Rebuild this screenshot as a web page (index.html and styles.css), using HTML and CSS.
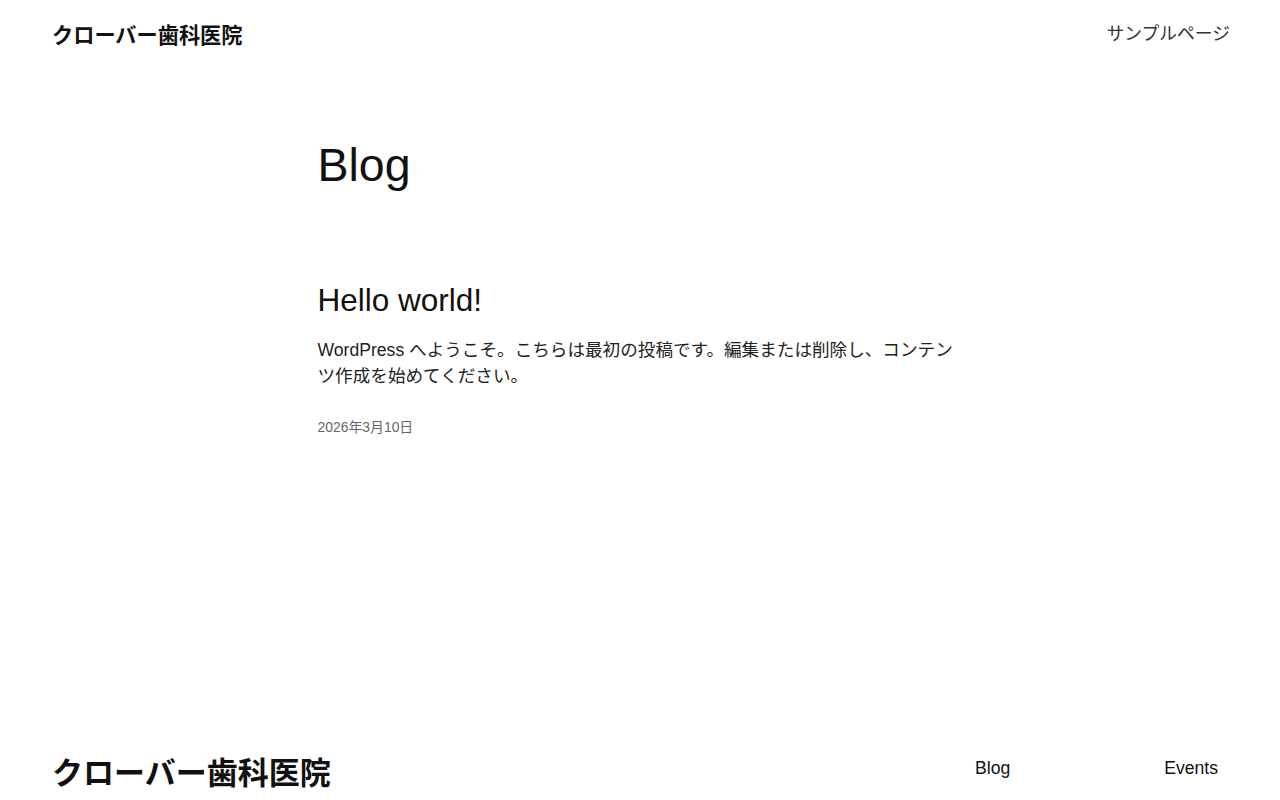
FILE: index.html
```html
<!DOCTYPE html>
<html lang="ja">
<head>
<meta charset="utf-8">
<title>Blog – クローバー歯科医院</title>
<link rel="stylesheet" href="styles.css">
</head>
<body>
<header class="site-header">
  <div class="site-title">クローバー歯科医院</div>
  <nav class="main-nav"><a href="#">サンプルページ</a></nav>
</header>
<main class="content">
  <h1 class="page-title">Blog</h1>
  <article class="post">
    <h2 class="post-title">Hello world!</h2>
    <p class="post-excerpt">WordPress へようこそ。こちらは最初の投稿です。編集または削除し、コンテンツ作成を始めてください。</p>
    <div class="post-date">2026年3月10日</div>
  </article>
</main>
<footer class="site-footer">
  <div class="footer-title">クローバー歯科医院</div>
  <nav class="footer-nav">
    <a href="#">Blog</a>
    <a href="#">Events</a>
  </nav>
</footer>
</body>
</html>
```

FILE: styles.css
```css
html, body {
  margin: 0;
  padding: 0;
  background: #fff;
  color: #111;
  font-family: "Liberation Sans", "Noto Sans CJK JP", sans-serif;
}
a { color: inherit; text-decoration: none; }

.site-header {
  display: flex;
  justify-content: space-between;
  align-items: center;
  padding: 18px 50px 0 52px;
  height: 30px;
}
.site-title {
  font-size: 21.2px;
  font-weight: 700;
}
.main-nav {
  font-size: 17.8px;
  color: #333;
  margin-top: -3px;
}

.content {
  width: 645px;
  margin: 0 auto;
  min-height: 612px;
}
.page-title {
  font-size: 46.5px;
  font-weight: 400;
  margin: 90px 0 0;
  line-height: 1.2;
}
.post { margin-top: 88px; }
.post-title {
  font-size: 31.5px;
  font-weight: 400;
  margin: 0;
  line-height: 1.2;
}
.post-excerpt {
  font-size: 17.6px;
  line-height: 26px;
  margin: 17px 0 0;
  color: #222;
}
.post-date {
  margin-top: 27px;
  font-size: 13.9px;
  color: #666;
}

.site-footer {
  display: flex;
  justify-content: space-between;
  align-items: flex-start;
  padding: 0 62px 0 52px;
}
.footer-title {
  font-size: 31px;
  font-weight: 700;
  line-height: 44px;
  padding-top: 2px;
}
.footer-nav {
  display: flex;
  gap: 154px;
  font-size: 17.6px;
  line-height: 36px;
}
```
